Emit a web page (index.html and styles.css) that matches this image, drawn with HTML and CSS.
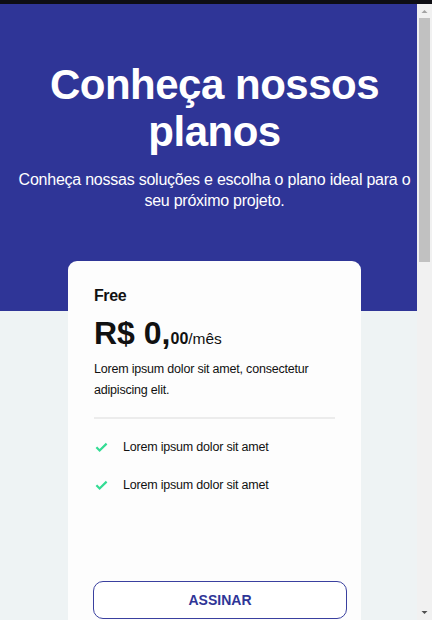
FILE: index.html
```html
<!DOCTYPE html>
<html lang="pt-BR">
<head>
<meta charset="utf-8">
<title>Planos</title>
<link rel="stylesheet" href="styles.css">
</head>
<body>
<div class="topbar"></div>
<div class="frame">
  <div class="page">
    <header class="hero">
      <h1 class="hero-title">Conheça nossos planos</h1>
      <p class="hero-sub">Conheça nossas soluções e escolha o plano ideal para o seu próximo projeto.</p>
    </header>
    <main class="plans">
      <article class="card">
        <h3 class="plan-name">Free</h3>
        <p class="price"><span class="price-main">R$ 0,</span><span class="price-cents">00</span><span class="price-period">/mês</span></p>
        <p class="plan-desc">Lorem ipsum dolor sit amet, consectetur adipiscing elit.</p>
        <hr class="divider">
        <ul class="features">
          <li class="feature">
            <svg class="check" viewBox="0 0 14 14" width="14" height="14"><path d="M2.4 7.3 L5.6 10.5 L12.6 3.6" fill="none" stroke="#33dc94" stroke-width="2.2"/></svg>
            <span>Lorem ipsum dolor sit amet</span>
          </li>
          <li class="feature">
            <svg class="check" viewBox="0 0 14 14" width="14" height="14"><path d="M2.4 7.3 L5.6 10.5 L12.6 3.6" fill="none" stroke="#33dc94" stroke-width="2.2"/></svg>
            <span>Lorem ipsum dolor sit amet</span>
          </li>
        </ul>
        <button class="subscribe">ASSINAR</button>
      </article>
    </main>
  </div>
  <div class="scrollbar" aria-hidden="true">
    <div class="sb-btn"><svg viewBox="0 0 15 14" width="15" height="14"><path d="M4.5 9 L7.5 6 L10.5 9 Z" fill="#a3a3a3"/></svg></div>
    <div class="sb-track"><div class="sb-thumb"></div></div>
    <div class="sb-btn"><svg viewBox="0 0 15 14" width="15" height="14"><path d="M4.5 5 L7.5 8 L10.5 5 Z" fill="#505050"/></svg></div>
  </div>
</div>
</body>
</html>
```
FILE: styles.css
```css
* { box-sizing: border-box; }

html, body {
  margin: 0;
  padding: 0;
  height: 620px;
  overflow: hidden;
}

body {
  font-family: "Liberation Sans", Arial, sans-serif;
  background: #0e0e14;
  color: #111;
}

.topbar {
  height: 4px;
  background: #0e0e14;
}

.frame {
  display: flex;
  height: 616px;
}

.page {
  flex: 1;
  min-width: 0;
  overflow: hidden;
  background: #eef3f4;
}

.scrollbar {
  width: 15px;
  flex: none;
  display: flex;
  flex-direction: column;
  background: #f1f1f1;
}

.sb-btn {
  height: 14px;
  flex: none;
}

.sb-btn svg { display: block; }

.sb-track {
  flex: 1;
  padding: 0 2px;
}

.sb-thumb {
  height: 244px;
  background: #c1c1c1;
}

.hero {
  background: #2f3597;
  color: #fff;
  text-align: center;
  padding: 57px 0 100px 12px;
}

.hero-title {
  margin: 0;
  font-size: 42px;
  line-height: 47px;
  font-weight: 700;
  letter-spacing: -0.5px;
}

.hero-sub {
  margin: 14px 0 0;
  font-size: 16px;
  line-height: 21px;
  letter-spacing: -0.24px;
}

.plans {
  display: flex;
  justify-content: center;
  padding-left: 12px;
  margin-top: -50px;
}

.card {
  width: 293px;
  background: #fdfdfd;
  border-radius: 9px;
  padding: 26px 26px 40px;
  display: flex;
  flex-direction: column;
}

.plan-name {
  margin: 0 0 11px;
  font-size: 16px;
  font-weight: 700;
  line-height: 17px;
  letter-spacing: -0.4px;
}

.price {
  margin: 0;
  line-height: 37px;
}

.price-main {
  font-size: 32px;
  font-weight: 700;
}

.price-cents {
  font-size: 16px;
  font-weight: 700;
}

.price-period {
  font-size: 15.5px;
}

.plan-desc {
  margin: 2px 0 0;
  font-size: 12.5px;
  line-height: 20.5px;
  letter-spacing: -0.2px;
}

.divider {
  border: 0;
  height: 2px;
  background: #ececec;
  margin: 17px 0 0;
}

.features {
  list-style: none;
  margin: 17.5px 0 0;
  padding: 0;
  display: flex;
  flex-direction: column;
  gap: 18.5px;
}

.feature {
  display: flex;
  align-items: center;
  gap: 15px;
  font-size: 12.5px;
  line-height: 20px;
  letter-spacing: -0.2px;
}

.check {
  flex: none;
  display: block;
}

.subscribe {
  margin: 86px 0 0 -1px;
  width: 254px;
  height: 38px;
  background: #fff;
  border: 1px solid #3a409f;
  border-radius: 10px;
  color: #2f3597;
  font-family: "Liberation Sans", Arial, sans-serif;
  font-size: 14px;
  font-weight: 700;
}
```
